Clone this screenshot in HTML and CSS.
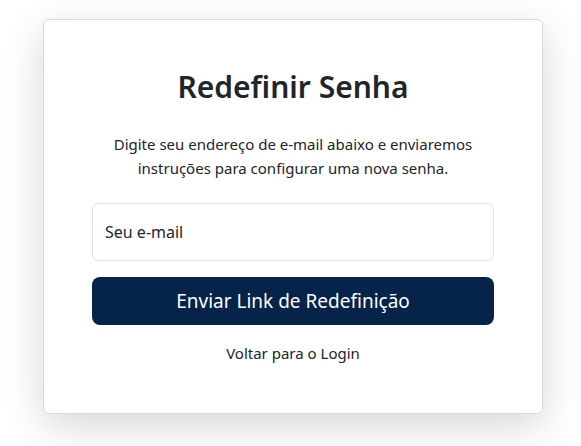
FILE: index.html
```html
<!DOCTYPE html>
<html lang="pt-BR">
<head>
<meta charset="utf-8">
<title>Redefinir Senha</title>
<link rel="stylesheet" href="styles.css">
</head>
<body>
<main class="page">
  <section class="card">
    <h2 class="title">Redefinir Senha</h2>
    <p class="lead">Digite seu endereço de e-mail abaixo e enviaremos instruções para configurar uma nova senha.</p>
    <form class="form">
      <div class="field">
        <input class="input" type="email" id="email" placeholder="Seu e-mail">
      </div>
      <button class="btn" type="button">Enviar Link de Redefinição</button>
    </form>
    <a class="back" href="#">Voltar para o Login</a>
  </section>
</main>
</body>
</html>
```

FILE: styles.css
```css
* { box-sizing: border-box; }
html, body { margin: 0; padding: 0; background: #fff; }
body {
  font-family: "Noto Sans", "Open Sans", sans-serif;
  color: #212529;
  font-size: 16px;
  line-height: 1.5;
}
.page {
  display: flex;
  justify-content: center;
  padding: 19px 0 40px 5px;
}
.card {
  width: 500px;
  background: #fff;
  border: 1px solid #d9d9d9;
  border-radius: 6px;
  box-shadow: 0 12px 40px rgba(0, 0, 0, 0.16);
  padding: 48px;
  display: flex;
  flex-direction: column;
  align-items: stretch;
  text-align: center;
}
.title {
  margin: 1px 0 27px;
  font-size: 30px;
  line-height: 36px;
  font-weight: 600;
  color: #212529;
}
.lead {
  margin: 0 0 23px;
  font-size: 15px;
  line-height: 24px;
}
.form { display: flex; flex-direction: column; gap: 16px; }
.field { display: flex; }
.input {
  width: 100%;
  height: 58px;
  padding: 16px 12px;
  border: 1px solid #dee2e6;
  border-radius: 6px;
  font: inherit;
  color: #212529;
  background: #fff;
}
.input::placeholder { color: #212529; opacity: 1; }
.btn {
  height: 48px;
  border: 0;
  border-radius: 8px;
  background: #06234a;
  color: #fff;
  font: inherit;
  font-size: 19px;
  line-height: 30px;
  cursor: pointer;
}
.back {
  margin-top: 16px;
  color: #212529;
  text-decoration: none;
  font-size: 15px;
  line-height: 24px;
}
```
